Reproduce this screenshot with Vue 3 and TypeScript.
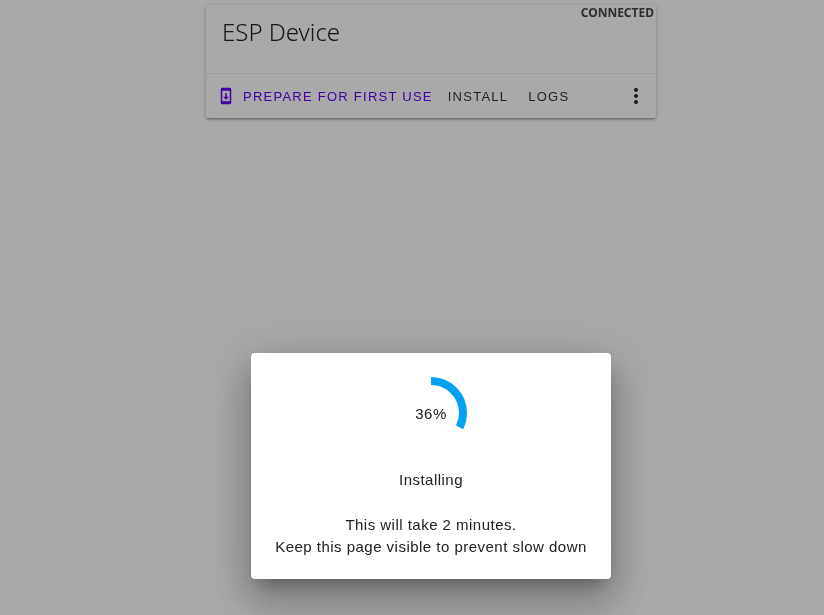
<template>
  <div class="page">
    <div class="device-card">
      <div class="status">CONNECTED</div>
      <div class="card-content">
        <h1 class="device-name">ESP Device</h1>
      </div>
      <div class="card-actions">
        <button class="action action--primary">
          <svg class="action-icon" viewBox="0 0 24 24" width="24" height="24">
            <path
              fill="currentColor"
              d="M17 1H7C5.9 1 5 1.9 5 3v18c0 1.1.9 2 2 2h10c1.1 0 2-.9 2-2V3c0-1.100-.9-2-2-2zm0 18H7V5h10v14zm-1-6h-3V8h-2v5H8l4 4 4-4z"
            />
          </svg>
          <span>PREPARE FOR FIRST USE</span>
        </button>
        <button class="action">INSTALL</button>
        <button class="action">LOGS</button>
        <button class="menu-button" aria-label="More">
          <svg viewBox="0 0 24 24" width="24" height="24">
            <path
              fill="currentColor"
              d="M12 8c1.100 0 2-.9 2-2s-.9-2-2-2-2 .9-2 2 .9 2 2 2zm0 2c-1.100 0-2 .9-2 2s.9 2 2 2 2-.9 2-2-.9-2-2-2zm0 6c-1.100 0-2 .9-2 2s.9 2 2 2 2-.9 2-2-.9-2-2-2z"
            />
          </svg>
        </button>
      </div>
    </div>

    <div class="scrim">
      <div class="dialog">
        <div class="progress">
          <svg viewBox="0 0 72 72" width="72" height="72">
            <circle
              class="progress-arc"
              cx="36"
              cy="36"
              :r="radius"
              :stroke-dasharray="`${arcLength} ${circumference}`"
              transform="rotate(-90 36 36)"
            />
          </svg>
          <span class="progress-label">{{ percent }}%</span>
        </div>
        <div class="step">Installing</div>
        <div class="note">
          This will take 2 minutes.<br />
          Keep this page visible to prevent slow down
        </div>
      </div>
    </div>
  </div>
</template>

<script setup lang="ts">
const percent = 36;
const radius = 32;
const circumference = 2 * Math.PI * radius;
const arcLength = (circumference * percent * 0.9) / 100;
</script>

<style>
html,
body {
  margin: 0;
  background: #fafafa;
}
</style>

<style scoped>
.page {
  height: 615px;
  overflow: hidden;
  font-family: "Liberation Sans", Arial, sans-serif;
  color: #212121;
}

.device-card {
  position: relative;
  box-sizing: border-box;
  width: 450px;
  height: 113px;
  margin: 5px 0 0 206px;
  display: flex;
  flex-direction: column;
  background: #fafafa;
  border-radius: 2px;
  box-shadow: 0 2px 2px 0 rgba(0, 0, 0, 0.14), 0 3px 1px -2px rgba(0, 0, 0, 0.12),
    0 1px 5px 0 rgba(0, 0, 0, 0.2);
  will-change: transform;
}

.status {
  position: absolute;
  top: 1px;
  right: 2px;
  font-family: "Noto Sans", sans-serif;
  font-size: 12px;
  font-weight: 700;
  line-height: 14px;
  color: #444;
}

.card-content {
  height: 68px;
  padding: 11px 16px 0;
  box-sizing: border-box;
}

.device-name {
  margin: 0;
  font-family: "Noto Sans", sans-serif;
  font-size: 24px;
  font-weight: 300;
  line-height: 32px;
  color: #212121;
}

.card-actions {
  flex: 1;
  display: flex;
  align-items: center;
  padding-left: 8px;
  border-top: 1px solid #e8e8e8;
}

.action {
  display: flex;
  align-items: center;
  height: 36px;
  padding: 0 8px;
  margin-right: 4px;
  background: none;
  border: none;
  font-family: inherit;
  font-size: 13px;
  letter-spacing: 1.25px;
  color: #333;
  cursor: pointer;
}

.action--primary {
  color: #6200ee;
  padding: 0 7px 0 0;
  margin-right: 0;
}

.action-icon {
  width: 18px;
  height: 18px;
  margin: 0 8px 0 3px;
}

.menu-button {
  margin-left: auto;
  margin-right: 8px;
  width: 24px;
  height: 24px;
  padding: 0;
  background: none;
  border: none;
  color: #212121;
}

.scrim {
  position: fixed;
  inset: 0;
  display: flex;
  background: rgba(0, 0, 0, 0.32);
  will-change: transform;
}

.dialog {
  box-sizing: border-box;
  width: 360px;
  height: 226px;
  margin: 353px 0 0 251px;
  padding: 24px 0 0;
  display: flex;
  flex-direction: column;
  align-items: center;
  background: #fff;
  border-radius: 4px;
  text-align: center;
  box-shadow: 0 11px 15px -7px rgba(0, 0, 0, 0.26), 0 24px 38px 3px rgba(0, 0, 0, 0.18),
    0 9px 46px 8px rgba(0, 0, 0, 0.16);
  font-size: 15px;
  letter-spacing: 0.48px;
  line-height: 22px;
  color: #212121;
}

.progress {
  position: relative;
  width: 72px;
  height: 72px;
}

.progress-arc {
  fill: none;
  stroke: #03a0f4;
  stroke-width: 8;
}

.progress-label {
  position: absolute;
  inset: 1px 0 0;
  display: flex;
  align-items: center;
  justify-content: center;
}

.step {
  margin-top: 20px;
}

.note {
  margin-top: 23px;
}
</style>
